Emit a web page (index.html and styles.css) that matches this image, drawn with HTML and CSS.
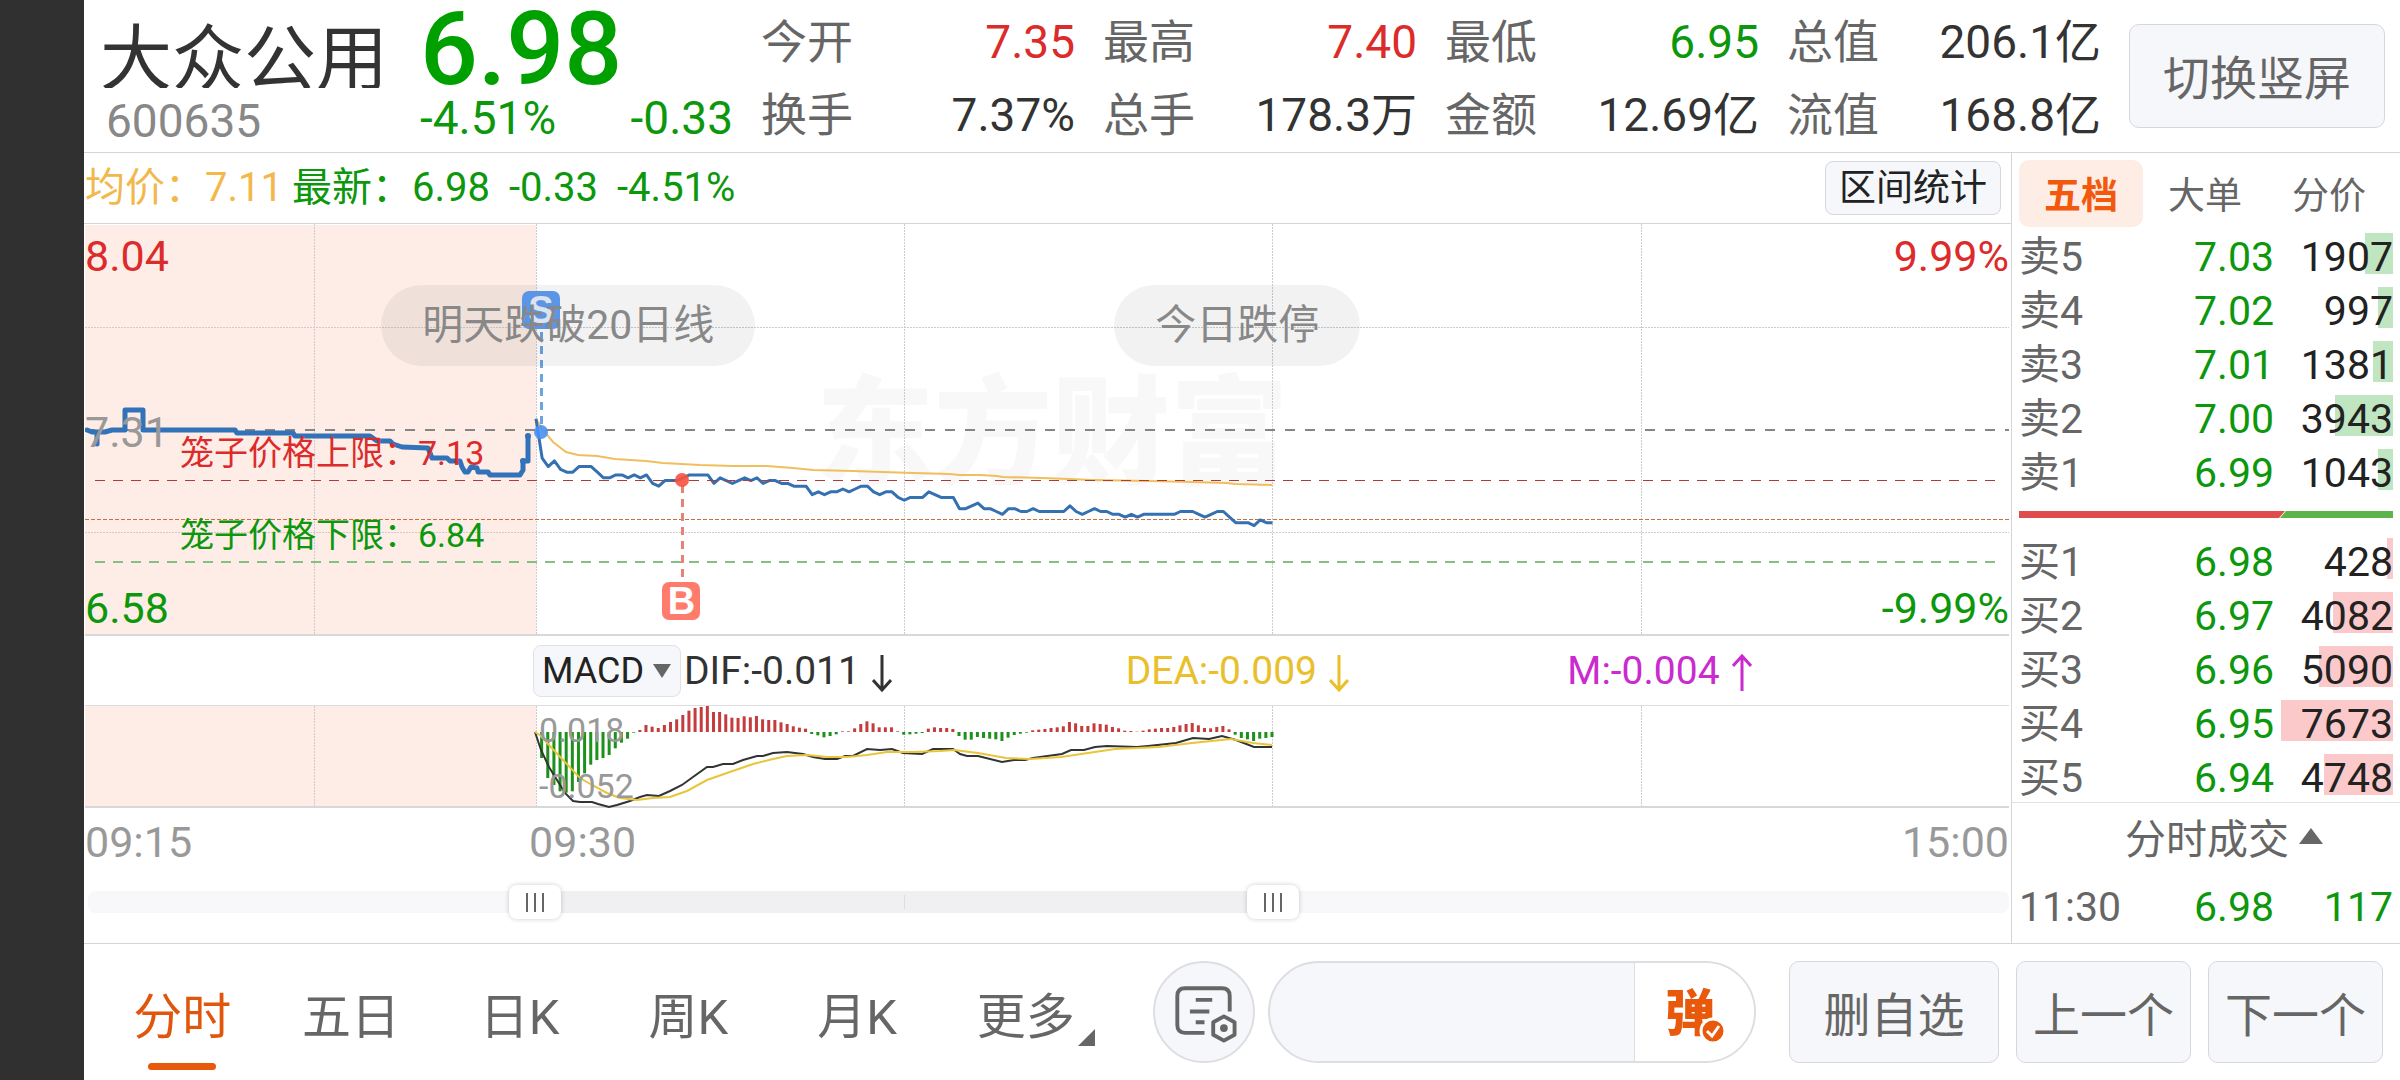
FILE: index.html
```html
<!DOCTYPE html>
<html lang="zh">

<head>
    <meta charset="UTF-8">
    <title>大众公用 600635</title>
    <link rel="stylesheet" href="styles.css">
</head>

<body>
    <div class="side"></div>
    <div class="app">
        <header class="header">
            <div class="stock">
                <h1 class="name">大众公用</h1>
                <p class="code">600635</p>
            </div>
            <div class="quote green">
                <p class="price">6.98</p>
                <p class="change"><span>-4.51%</span><span>-0.33</span></p>
            </div>
            <dl class="stats">
                <div><dt>今开</dt><dd class="red">7.35</dd></div>
                <div><dt>最高</dt><dd class="red">7.40</dd></div>
                <div><dt>最低</dt><dd class="green">6.95</dd></div>
                <div><dt>总值</dt><dd>206.1亿</dd></div>
                <div><dt>换手</dt><dd>7.37%</dd></div>
                <div><dt>总手</dt><dd>178.3万</dd></div>
                <div><dt>金额</dt><dd>12.69亿</dd></div>
                <div><dt>流值</dt><dd>168.8亿</dd></div>
            </dl>
            <button class="btn rotate">切换竖屏</button>
        </header>

        <main class="main">
            <section class="charts">
                <div class="legend">
                    <span class="avg">均价：7.11</span>
                    <span class="green">最新：6.98</span>
                    <span class="green">-0.33</span>
                    <span class="green">-4.51%</span>
                    <button class="btn range-btn">区间统计</button>
                </div>

                <div class="pane price-pane">
                    <span class="watermark">东方财富</span>
                    <svg class="plot" viewBox="85 224 1924 410" preserveAspectRatio="none">
                        <rect class="auction" x="85" y="225" width="451" height="410" />
                        <path class="grid" d="M314.5 224V634M536.5 224V634M904.5 224V634M1272.5 224V634M1641.5 224V634M85 327.5H2009M85 532.5H2009" />
                        <path class="base" d="M85 430H2009" />
                        <path class="last" d="M85 519.5H2009" />
                        <polyline class="pre" points="87,430 92,432 105,432 112,430 125,430 125,410 143,410 143,430 235,430 237,433 293,433 295,436 370,436 377,441 390,441 393,444 402,447 428,448 432,458 447,458 450,461 460,461 462,467 465,472 468,472 471,467 477,468 478,472 488,472 490,475 520,475 523,470 523,461 528,461 528,436" />
                        <path class="pre" d="M97 433V444" />
                        <circle cx="528" cy="436" r="3" class="pre-dot" />
                        <circle cx="523" cy="461" r="3" class="pre-dot" />
                        <polyline class="avg-line" points="536,419 543,430 553,442 566,452 578,455 597,456 615,459 646,461 663,463 700,465 733,466 767,466 793,468 813,470 853,471 883,472 913,473 950,474 959,475 980,475 997,476 1003,477 1043,478 1093,480 1147,481 1193,482 1227,483 1235,484 1272,485" />
                        <polyline class="price-line" id="priceLine" />
                        <path class="upper" d="M95 480.5H1996" />
                        <path class="lower" d="M95 562H1996" />
                        <path class="sell-line" d="M541.5 332V426" />
                        <circle class="sell-dot" cx="541" cy="432" r="7" />
                        <path class="buy-line" d="M682.5 485V581" />
                        <circle class="buy-dot" cx="682" cy="480" r="7" />
                    </svg>
                    <span class="axis top red">8.04</span>
                    <span class="axis mid">7.31</span>
                    <span class="axis bottom green">6.58</span>
                    <span class="axis top right red">9.99%</span>
                    <span class="axis bottom right green">-9.99%</span>
                    <span class="limit limit-up red">笼子价格上限：7.13</span>
                    <span class="limit limit-down green">笼子价格下限：6.84</span>
                    <span class="badge sell">S</span>
                    <span class="badge buy">B</span>
                    <span class="pill pill-a">明天跌破20日线</span>
                    <span class="pill pill-b">今日跌停</span>
                </div>

                <div class="macd-bar">
                    <label class="picker">
                        <select aria-label="指标">
                            <option>MACD</option>
                            <option>KDJ</option>
                        </select>
                        <svg width="18" height="14" viewBox="0 0 18 14"><path d="M0 0H18L9 14Z" fill="#666" /></svg>
                    </label>
                    <div class="values">
                        <span>DIF:-0.011<svg class="arrow" viewBox="0 0 20 38"><path d="M10 1V36M1 26L10 36L19 26" /></svg></span>
                        <span class="dea">DEA:-0.009<svg class="arrow" viewBox="0 0 20 38"><path d="M10 1V36M1 26L10 36L19 26" /></svg></span>
                        <span class="m">M:-0.004<svg class="arrow" viewBox="0 0 20 38"><path d="M10 37V2M1 12L10 2L19 12" /></svg></span>
                    </div>
                </div>

                <div class="pane macd-pane">
                    <svg class="plot" viewBox="85 706 1924 100" preserveAspectRatio="none">
                        <rect class="auction" x="85" y="706" width="451" height="100" />
                        <path class="grid" d="M314.5 706V806M536.5 706V806M904.5 706V806M1272.5 706V806M1641.5 706V806" />
                        <g id="macdBars"></g>
                        <polyline class="dif-line" points="535,732 541,750 549,767 557,780 565,793 573,801 580,802 592,802 598,804 609,807 617,805 630,801 640,797 647,795 659,796 670,791 682,785 693,777 707,767 713,767 723,764 733,764 743,760 757,756 763,756 773,753 787,752 803,754 813,757 825,759 837,759 845,756 853,756 867,749 880,750 892,749 903,753 922,754 933,749 953,749 960,754 967,756 978,756 1002,762 1014,760 1025,760 1033,758 1062,754 1071,750 1084,750 1095,747 1107,746 1137,747 1148,746 1176,743 1193,738 1209,739 1222,736 1236,740 1254,747 1272,747" />
                        <polyline class="dea-line" points="535,732 541,736 549,745 563,760 580,778 592,785 607,793 620,798 637,800 653,798 670,797 687,791 707,780 727,773 753,764 773,759 787,756 807,755 827,757 847,757 867,755 887,752 913,752 940,751 954,750 978,753 1006,758 1030,759 1061,757 1088,753 1115,749 1159,747 1192,743 1231,739 1253,743 1272,745" />
                    </svg>
                    <span class="scale high">0.018</span>
                    <span class="scale low">-0.052</span>
                </div>

                <div class="times">
                    <span>09:15</span>
                    <span class="open-time">09:30</span>
                    <span>15:00</span>
                </div>

                <div class="slider">
                    <div class="track"></div>
                    <input type="range" min="0" max="1000" value="225" aria-label="开始时间">
                    <input type="range" min="0" max="1000" value="620" aria-label="结束时间">
                </div>
            </section>

            <aside class="book">
                <div class="book-tabs">
                    <button class="active">五档</button>
                    <button>大单</button>
                    <button>分价</button>
                </div>
                <table class="levels" id="sells"></table>
                <svg class="ratio" viewBox="0 0 374 7" preserveAspectRatio="none">
                    <path d="M0 0H266L260 7H0Z" fill="#e04b4b" />
                    <path d="M267 0H374V7H261Z" fill="#5bb548" />
                </svg>
                <table class="levels" id="buys"></table>
                <button class="deals">分时成交<svg width="24" height="16" viewBox="0 0 24 16"><path d="M12 0L24 16H0Z" fill="#666" /></svg></button>
                <table class="levels">
                    <tr>
                        <td>11:30</td>
                        <td class="green">6.98</td>
                        <td class="green">117</td>
                    </tr>
                </table>
            </aside>
        </main>

        <footer class="footer">
            <nav class="tabs">
                <button class="active">分时</button>
                <button>五日</button>
                <button>日K</button>
                <button>周K</button>
                <button>月K</button>
                <button class="more">更多</button>
            </nav>
            <button class="note" aria-label="设置">
                <svg viewBox="0 0 101 101">
                    <path d="M51 72H31Q23 72 23 64V34Q23 26 31 26H69Q77 26 77 34V50" />
                    <path d="M42 38H59M36 50H56M42 61H51" />
                    <path d="M71 55L82 61V74L71 80L60 74V61Z" />
                    <circle cx="71" cy="67" r="4" class="dot" />
                </svg>
            </button>
            <div class="danmu">
                <input type="text" aria-label="弹幕">
                <button aria-label="弹幕开关">
                    <span>弹</span>
                    <svg viewBox="0 0 28 28">
                        <circle cx="14" cy="14" r="12" />
                        <path d="M8 14L13 19L20 9" />
                    </svg>
                </button>
            </div>
            <div class="actions">
                <button class="btn wide">删自选</button>
                <button class="btn">上一个</button>
                <button class="btn">下一个</button>
            </div>
        </footer>
    </div>

    <script type="text/javascript">
        // 每分钟价格，单位：分
        var prices = [
            735, 721, 718, 720, 717, 716, 716, 718, 718, 718, 716, 714, 714, 715, 715, 714, 715, 714, 715, 712,
            711, 713, 713, 713, 714, 715, 715, 715, 715, 712, 714, 713, 712, 713, 714, 713, 714, 712, 713, 713,
            712, 712, 711, 711, 711, 708, 709, 708, 709, 709, 710, 709, 710, 711, 711, 709, 708, 709, 709, 707,
            706, 707, 707, 707, 709, 708, 707, 707, 707, 703, 703, 704, 705, 703, 703, 702, 701, 703, 703, 702,
            702, 703, 702, 702, 702, 702, 702, 704, 702, 701, 702, 703, 702, 702, 701, 701, 700, 701, 700, 701,
            701, 701, 701, 701, 701, 702, 702, 702, 701, 700, 701, 702, 702, 700, 698, 698, 698, 697, 699, 698, 698
        ];
        var macd = [
            0, -78, -138, -159, -178, -182, -178, -150, -124, -98, -84, -78, -69, -49, -32, -20, -2, 6, 21, 16,
            12, 21, 30, 38, 51, 64, 72, 75, 78, 60, 60, 53, 43, 42, 47, 44, 48, 38, 36, 36,
            29, 24, 17, 13, 10, -6, -10, -16, -12, -7, 2, 2, 11, 24, 32, 26, 14, 14, 14, 2,
            -8, -7, -5, -3, 10, 14, 12, 12, 9, -12, -23, -23, -15, -18, -20, -22, -27, -17, -9, -5,
            -2, 5, 7, 9, 12, 14, 17, 30, 26, 18, 18, 26, 24, 22, 15, 11, 4, 3, 1, 4,
            8, 10, 12, 12, 15, 20, 24, 27, 20, 12, 11, 15, 18, 8, -8, -18, -22, -27, -20, -18, -15
        ];
        var sells = [["卖5", "7.03", 1907], ["卖4", "7.02", 997], ["卖3", "7.01", 1381], ["卖2", "7.00", 3943], ["卖1", "6.99", 1043]];
        var buys = [["买1", "6.98", 428], ["买2", "6.97", 4082], ["买3", "6.96", 5090], ["买4", "6.95", 7673], ["买5", "6.94", 4748]];
        var step = 736.5 / 120;

        drawPrice();
        drawMacd();
        showLevels("sells", sells);
        showLevels("buys", buys);

        function drawPrice() {
            let points = prices.map(function(p, i) {
                return (536 + i * step) + "," + (430 + (731 - p) * 2.81);
            });
            document.getElementById("priceLine").setAttribute("points", points.join(" "));
        }

        function drawMacd() {
            let html = "";
            for (let i = 0; i < macd.length; i++) {
                let h = Math.abs(macd[i]) / 3;
                let y = macd[i] > 0 ? 732 - h : 732;
                html += '<rect class="' + (macd[i] > 0 ? "up" : "down") + '" x="' + (534 + i * step) + '" y="' + y + '" width="3" height="' + h + '"/>';
            }
            document.getElementById("macdBars").innerHTML = html;
        }

        function showLevels(id, rows) {
            let max = 7673; //最大挂单量
            document.getElementById(id).innerHTML = rows.map(function(r) {
                return '<tr><td>' + r[0] + '</td><td class="green">' + r[1] + '</td>' +
                    '<td><i class="bar" style="width:' + (r[2] / max * 100) + '%"></i><span>' + r[2] + '</span></td></tr>';
            }).join("");
        }
    </script>
</body>

</html>
```

FILE: styles.css
```css
* {
    margin: 0;
    padding: 0;
    box-sizing: border-box;
}

body {
    display: flex;
    min-height: 100vh;
    background: #fff;
    color: #333;
    font-family: Roboto, "Noto Sans CJK SC", sans-serif;
    font-size: 46px;
}

button,
input,
select {
    font: inherit;
    color: inherit;
    background: none;
    border: 0;
}

button {
    cursor: pointer;
}

.red {
    color: #dc2b2b;
}

.green {
    color: #0c970c;
}

.side {
    width: 84px;
    flex: none;
    background: #303030;
}

.app {
    flex: 1;
    min-width: 0;
    display: flex;
    flex-direction: column;
}

.btn {
    background: #f6f7fa;
    border: 1px solid #d5d7da;
    border-radius: 10px;
    color: #666;
}

/* header */
.header {
    display: flex;
    height: 153px;
    padding-left: 16px;
    border-bottom: 1px solid #d5d5d5;
}

.stock {
    width: 320px;
}

.name {
    height: 70px;
    margin-top: 18px;
    overflow: hidden;
    font-size: 72px;
    font-weight: 400;
    line-height: 84px;
}

.code {
    padding-left: 6px;
    color: #888;
    line-height: 66px;
}

.quote {
    width: 313px;
}

.price {
    height: 88px;
    color: #00a000;
    font-size: 102px;
    font-weight: 500;
    line-height: 98px;
}

.change {
    display: flex;
    justify-content: space-between;
    line-height: 61px;
}

.stats {
    flex: 1;
    display: grid;
    grid-template-columns: repeat(4, 1fr);
    column-gap: 28px;
    padding: 7px 28px 0 28px;
    line-height: 71px;
}

.stats div {
    display: flex;
    justify-content: space-between;
}

.stats dt {
    color: #666;
}

.rotate {
    width: 256px;
    height: 104px;
    margin: 24px 15px 0 0;
    padding-bottom: 4px;
    font-size: 47px;
}

/* chart column */
.main {
    display: flex;
}

.charts {
    flex: 1;
    min-width: 0;
}

.legend {
    display: flex;
    align-items: center;
    gap: 20px;
    height: 71px;
    padding: 0 10px 0 1px;
    border-bottom: 1px solid #d5d5d5;
    font-size: 40px;
    line-height: 70px;
}

.legend .green {
    margin-right: -1px;
}

.avg {
    margin-right: -11px;
    color: #f2b84b;
}

.range-btn {
    width: 176px;
    height: 54px;
    margin-left: auto;
    color: #222;
    font-size: 37px;
    line-height: 54px;
    border-radius: 8px;
}

.pane {
    position: relative;
    margin: 0 2px 0 1px;
    border-bottom: 2px solid #d8d8d8;
}

.plot {
    position: relative;
    display: block;
    width: 100%;
}

.price-pane .plot {
    height: 410px;
}

.macd-pane .plot {
    height: 100px;
    overflow: visible;
}

.plot path,
.plot polyline {
    fill: none;
}

.auction {
    fill: #fdede6;
}

.grid {
    stroke: #ccc;
    stroke-dasharray: 2 1;
}

.base {
    stroke: #858585;
    stroke-width: 2;
    stroke-dasharray: 10 10;
}

.last {
    stroke: #cc6f40;
    stroke-dasharray: 4 2;
}

.upper {
    stroke: #b03a3a;
    stroke-dasharray: 10 8;
}

.lower {
    stroke: #86bf84;
    stroke-width: 2;
    stroke-dasharray: 10 8;
}

.pre {
    stroke: #3272b8;
    stroke-width: 5;
    stroke-linejoin: round;
    stroke-linecap: round;
}

.pre-dot {
    fill: #3272b8;
}

.price-line {
    stroke: #3570b0;
    stroke-width: 3;
    stroke-linejoin: round;
}

.avg-line {
    stroke: #f0bf5c;
    stroke-width: 2;
}

.sell-line {
    stroke: #6ea3e2;
    stroke-width: 3;
    stroke-dasharray: 8 6;
}

.sell-dot {
    fill: #4a90f5;
    opacity: .9;
}

.buy-line {
    stroke: #e58375;
    stroke-width: 3;
    stroke-dasharray: 8 6;
}

.buy-dot {
    fill: #f8523f;
    opacity: .9;
}

.watermark {
    position: absolute;
    left: 38%;
    top: 136px;
    color: #f8f8f8;
    font-size: 118px;
    font-weight: 900;
    line-height: 150px;
}

.axis {
    position: absolute;
    left: 0;
    color: #999;
    font-size: 43px;
    line-height: 44px;
}

.axis.right {
    left: auto;
    right: 0;
}

.axis.top {
    top: 10px;
}

.axis.mid {
    top: 186px;
}

.axis.bottom {
    bottom: 4px;
}

.axis.red {
    color: #dc2b2b;
}

.axis.green {
    color: #0c970c;
}

.limit {
    position: absolute;
    left: 95px;
    font-size: 34px;
    line-height: 40px;
}

.limit-up {
    top: 209px;
}

.limit-down {
    top: 291px;
}

.badge {
    position: absolute;
    width: 38px;
    height: 38px;
    margin-left: -19px;
    border-radius: 7px;
    color: #fff;
    font-family: "Liberation Sans", sans-serif;
    font-size: 38px;
    font-weight: 700;
    line-height: 38px;
    text-align: center;
}

.sell {
    left: 23.7%;
    top: 67px;
    color: #e8f0fc;
    background: #609df2;
}

.buy {
    left: 31%;
    top: 358px;
    background: #ff7c6c;
}

.pill {
    position: absolute;
    top: 61px;
    padding: 0 41px;
    border-radius: 41px;
    background: rgba(0, 0, 0, .05);
    color: #888;
    font-size: 41px;
    line-height: 81px;
}

.pill-a {
    left: 15.4%;
}

.pill-b {
    left: 53.5%;
}

/* indicator */
.macd-bar {
    display: flex;
    align-items: center;
    height: 70px;
    margin: 0 2px 0 1px;
    padding-left: 448px;
    border-bottom: 1px solid #ddd;
    font-size: 39px;
}

.picker {
    position: relative;
    flex: none;
    margin-right: 3px;
}

.picker select {
    display: block;
    width: 148px;
    height: 52px;
    padding-left: 8px;
    appearance: none;
    border: 1px solid #e0e2e6;
    border-radius: 8px;
    background: #f6f7fa;
    color: #222;
    font-size: 36px;
}

.picker svg {
    position: absolute;
    right: 10px;
    top: 19px;
    pointer-events: none;
}

.values {
    flex: 1;
    display: grid;
    grid-template-columns: repeat(3, 1fr);
}

.arrow {
    width: 20px;
    height: 38px;
    margin-left: 12px;
    vertical-align: -8px;
    fill: none;
    stroke: currentColor;
    stroke-width: 3;
}

.dea {
    color: #e9c02c;
}

.m {
    color: #c92bcf;
}

.up {
    fill: #c43c3c;
}

.down {
    fill: #1c911c;
}

.dif-line {
    stroke: #333;
    stroke-width: 2;
}

.dea-line {
    stroke: #e8c53a;
    stroke-width: 2;
}

.scale {
    position: absolute;
    left: 454px;
    color: #999;
    font-size: 34px;
    line-height: 34px;
}

.scale.high {
    top: 7px;
}

.scale.low {
    bottom: 3px;
}

.times {
    display: flex;
    justify-content: space-between;
    padding: 0 2px 0 1px;
    color: #999;
    font-size: 43px;
    line-height: 69px;
}

.open-time {
    margin-left: 337px;
    margin-right: auto;
}

.slider {
    position: relative;
    height: 66px;
    margin: 0 2px 0 4px;
    padding-top: 14px;
}

.track {
    height: 22px;
    border-radius: 8px;
    background:
        linear-gradient(#ddd, #ddd) 42.5% 50% / 1px 14px no-repeat,
        linear-gradient(90deg, #f8f8fb 24%, #f0f0f3 24%, #f0f0f3 62%, #f8f8fb 62%);
}

.slider input {
    position: absolute;
    left: 0;
    top: 8px;
    width: 100%;
    height: 34px;
    appearance: none;
    pointer-events: none;
}

.slider input::-webkit-slider-thumb {
    appearance: none;
    width: 52px;
    height: 34px;
    border-radius: 8px;
    background:
        linear-gradient(90deg, #666 2px, transparent 2px, transparent 8px, #666 8px, #666 10px, transparent 10px, transparent 16px, #666 16px) center / 18px 19px no-repeat,
        #fff;
    box-shadow: 0 0 5px rgba(0, 0, 0, .2);
    pointer-events: auto;
}

/* order book */
.book {
    width: 389px;
    padding-top: 7px;
    border-left: 1px solid #d5d5d5;
    font-size: 41px;
}

.book-tabs {
    display: flex;
    padding-left: 7px;
    margin-bottom: 3px;
    color: #666;
    font-size: 37px;
}

.book-tabs button {
    width: 124px;
    height: 67px;
    padding-bottom: 2px;
    border-radius: 10px;
}

.book-tabs .active {
    background: #feede5;
    color: #f2590d;
    font-weight: 700;
}

.levels {
    width: 374px;
    margin-left: 7px;
    border-collapse: collapse;
    table-layout: fixed;
    line-height: 54px;
}

.levels td {
    position: relative;
    height: 54px;
    width: 112px;
    text-align: right;
}

.levels td:first-child {
    width: 110px;
    color: #666;
    text-align: left;
}

.levels td:nth-child(2) {
    width: 152px;
    padding-right: 7px;
}

.levels td:nth-child(3) {
    width: 112px;
}

.levels span {
    position: relative;
    color: #222;
}

.bar {
    position: absolute;
    right: 0;
    top: 3px;
    height: 41px;
    background: #bfe6c0;
}

#buys .bar {
    background: #fbc9c9;
}

.ratio {
    display: block;
    width: 374px;
    height: 7px;
    margin: 11px 0 17px 7px;
}

.deals {
    display: flex;
    align-items: center;
    justify-content: center;
    gap: 10px;
    width: 100%;
    height: 78px;
    margin-top: -3px;
    padding: 0 0 12px 36px;
    border-top: 1px solid #e3e3e3;
    color: #666;
}

/* footer */
.footer {
    display: flex;
    align-items: center;
    height: 137px;
    padding: 0 17px 0 15px;
    border-top: 1px solid #d5d5d5;
    color: #666;
}

.tabs {
    flex: 1;
    display: flex;
    max-width: 1012px;
    font-size: 49px;
}

.tabs button {
    position: relative;
    flex: 1;
    height: 136px;
    padding-right: 2px;
}

.tabs .active {
    color: #e0560c;
}

.tabs .active::after {
    content: "";
    position: absolute;
    left: 50%;
    bottom: 10px;
    width: 68px;
    height: 7px;
    margin-left: -35px;
    border-radius: 4px;
    background: #e8590c;
}

.more::after {
    content: "";
    position: absolute;
    right: 16px;
    bottom: 34px;
    border-left: 17px solid transparent;
    border-bottom: 17px solid #666;
}

.note {
    flex: none;
    width: 102px;
    height: 102px;
    margin-left: 42px;
    border: 2px solid #dcdee2;
    border-radius: 50%;
    background: #f6f7fa;
}

.note svg {
    display: block;
    fill: none;
    stroke: #666;
    stroke-width: 4;
    stroke-linejoin: round;
}

.note .dot {
    fill: #666;
    stroke: none;
}

.danmu {
    display: flex;
    flex: none;
    width: 488px;
    height: 102px;
    margin-left: 13px;
    overflow: hidden;
    border: 2px solid #dcdee2;
    border-radius: 51px;
    background: #f6f7fa;
}

.danmu input {
    flex: 1;
    min-width: 0;
    padding: 0 30px;
}

.danmu button {
    position: relative;
    width: 120px;
    padding: 0 42px 6px 30px;
    border-left: 1px solid #dcdee2;
    background: #fff;
    color: #e8590c;
    font-size: 50px;
    font-weight: 900;
}

.danmu svg {
    position: absolute;
    left: 64px;
    top: 54px;
    width: 28px;
    height: 28px;
    fill: #e8590c;
    stroke: #fff;
    stroke-width: 3;
}

.actions {
    display: flex;
    gap: 17px;
    margin-left: auto;
    font-size: 47px;
}

.actions .btn {
    width: 175px;
    height: 102px;
    padding-bottom: 2px;
}

.actions .wide {
    width: 210px;
}
```
